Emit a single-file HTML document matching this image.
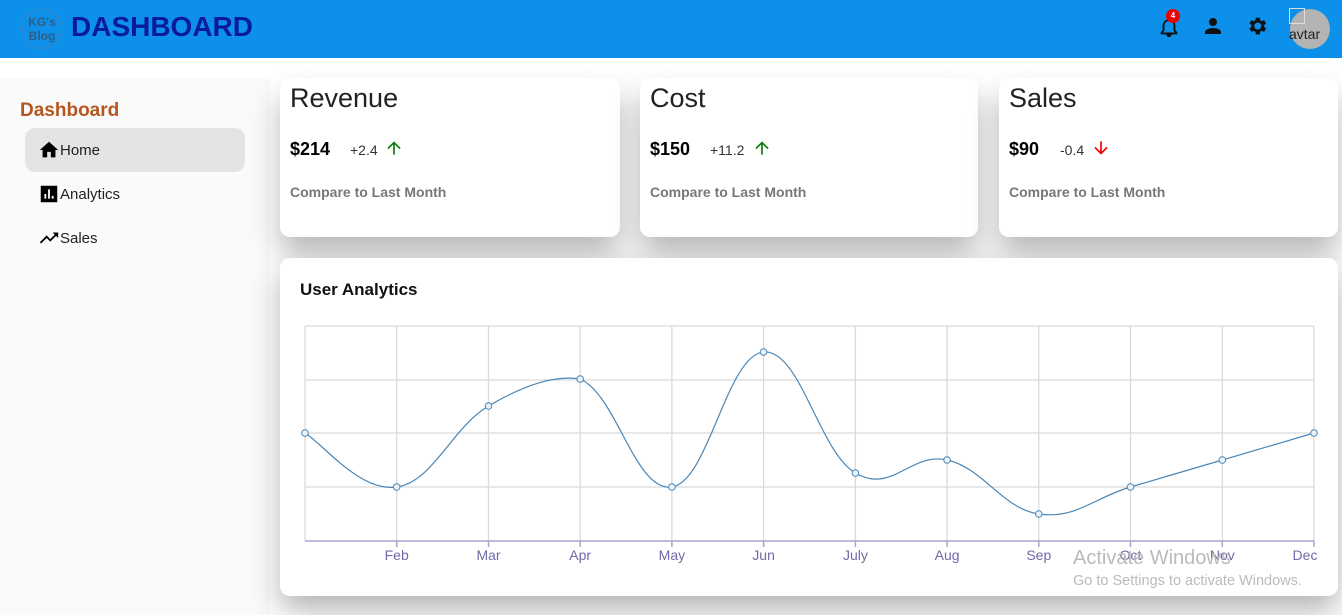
<!DOCTYPE html>
<html><head><meta charset="utf-8"><style>
*{box-sizing:border-box;margin:0;padding:0}
body{width:1342px;height:615px;overflow:hidden;background:#fff;font-family:"Liberation Sans",sans-serif;position:relative}
.hdr{position:absolute;left:0;top:0;width:1342px;height:58px;background:#0d90e9}
.logo{position:absolute;left:22px;top:9px;width:40px;height:40px;border-radius:50%;border:1px solid #3a86c4;color:#2f5e86;font-size:12px;font-weight:bold;line-height:14px;text-align:center;padding-top:5px}
.title{position:absolute;left:71px;top:11px;font-size:28px;font-weight:bold;color:#0a1a9c}
.side{position:absolute;left:0;top:78px;width:270px;height:537px;background:#fafafa}
.side h3{position:absolute;left:20px;top:22px;font-size:19px;color:#b5551f}
.item{position:absolute;left:25px;width:220px;height:44px;border-radius:10px;font-size:15px;color:#222;padding-left:13px;display:flex;align-items:center;gap:0}
.card{position:absolute;top:78px;height:159px;background:#fff;border-radius:10px;box-shadow:0 18px 30px rgba(0,0,0,.28)}
.card h2{position:absolute;left:10px;top:5px;font-size:27px;font-weight:normal;color:#222}
.card .v{position:absolute;left:10px;top:61px;font-size:18px;font-weight:bold}
.card .d{position:absolute;top:64px;font-size:14px;color:#333}
.card .c{position:absolute;left:10px;top:106px;font-size:14px;font-weight:bold;color:#777}
.chart{position:absolute;left:280px;top:258px;width:1058px;height:338px;background:#fff;border-radius:10px;box-shadow:0 14px 30px rgba(0,0,0,.3)}
</style></head><body>
<div class="hdr">
<div class="logo">KG's<br>Blog</div>
<div class="title">DASHBOARD</div>
<svg style="position:absolute;left:1158px;top:16px" width="22" height="22" viewBox="0 0 24 24"><path d="M12 22a2 2 0 0 0 2-2h-4a2 2 0 0 0 2 2zm6-6v-5c0-3-1.6-5.6-4.5-6.3V4a1.5 1.5 0 0 0-3 0v.7C7.6 5.4 6 8 6 11v5l-2 2v1h16v-1z" fill="none" stroke="#111" stroke-width="2"/></svg>
<div style="position:absolute;left:1166px;top:9px;width:14px;height:14px;border-radius:50%;background:#e00;color:#fff;font-size:8px;text-align:center;line-height:14px;font-weight:bold">4</div>
<svg style="position:absolute;left:1201px;top:14px" width="24" height="24" viewBox="0 0 24 24"><path d="M12 12a4 4 0 1 0 0-8 4 4 0 0 0 0 8zm0 2c-2.7 0-8 1.3-8 4v2h16v-2c0-2.7-5.3-4-8-4z" fill="#111"/></svg>
<svg style="position:absolute;left:1245px;top:14px" width="24" height="24" viewBox="0 0 24 24"><path d="M19.1 12.9a7 7 0 0 0 0-1.8l2-1.6-2-3.4-2.4 1a7 7 0 0 0-1.6-.9L14.8 3.6h-4l-.4 2.6a7 7 0 0 0-1.5.9l-2.5-1-2 3.4 2.1 1.6a7 7 0 0 0 0 1.8l-2.1 1.6 2 3.4 2.5-1c.5.4 1 .7 1.5.9l.4 2.6h4l.3-2.6c.6-.2 1.1-.5 1.6-.9l2.4 1 2-3.4zM12.8 15.5a3.5 3.5 0 1 1 0-7 3.5 3.5 0 0 1 0 7z" fill="#111"/></svg>
<div style="position:absolute;left:1290px;top:9px;width:40px;height:40px;border-radius:50%;background:#b3b3b3"></div>
<div style="position:absolute;left:1289px;top:8px;width:16px;height:16px;border:1px solid #ddd"></div>
<div style="position:absolute;left:1289px;top:26px;font-size:14px;color:#222">avtar</div>
</div>
<div class="side">
<h3>Dashboard</h3>
<div class="item" style="top:50px;background:#e5e3e3"><svg width="22" height="22" viewBox="0 0 24 24"><path d="M10 20v-6h4v6h5v-8h3L12 3 2 12h3v8z" fill="#000"/></svg>Home</div>
<div class="item" style="top:94px"><svg width="22" height="22" viewBox="0 0 24 24"><path d="M3 3h18v18H3zM7 12v5h2v-5zm4-5v10h2V7zm4 7v3h2v-3z" fill="#000" fill-rule="evenodd"/></svg>Analytics</div>
<div class="item" style="top:138px"><svg width="22" height="22" viewBox="0 0 24 24"><path d="M16 6l2.3 2.3-4.9 4.9-4-4L2 16.6 3.4 18l6-6 4 4 6.3-6.3L22 12V6z" fill="#000"/></svg>Sales</div>
</div>
<div class="card" style="left:280px;width:340px"><h2>Revenue</h2><div class="v">$214</div><div class="d" style="left:70px">+2.4</div><svg style="position:absolute;left:104px;top:60px" width="20" height="20" viewBox="0 0 24 24"><path d="M4 12l1.4 1.4L11 7.8V20h2V7.8l5.6 5.6L20 12l-8-8z" fill="#0a7a0a"/></svg><div class="c">Compare to Last Month</div></div>
<div class="card" style="left:640px;width:338px"><h2>Cost</h2><div class="v">$150</div><div class="d" style="left:70px">+11.2</div><svg style="position:absolute;left:112px;top:60px" width="20" height="20" viewBox="0 0 24 24"><path d="M4 12l1.4 1.4L11 7.8V20h2V7.8l5.6 5.6L20 12l-8-8z" fill="#0a7a0a"/></svg><div class="c">Compare to Last Month</div></div>
<div class="card" style="left:999px;width:339px"><h2>Sales</h2><div class="v">$90</div><div class="d" style="left:61px">-0.4</div><svg style="position:absolute;left:92px;top:60px" width="20" height="20" viewBox="0 0 24 24"><path d="M20 12l-1.4-1.4-5.6 5.6V4h-2v12.2l-5.6-5.6L4 12l8 8z" fill="#e00"/></svg><div class="c">Compare to Last Month</div></div>
<div class="chart"><div style="position:absolute;left:20px;top:22px;font-size:17px;font-weight:bold;color:#111">User Analytics</div></div>
<svg style="position:absolute;left:0;top:0" width="1342" height="615">
<g stroke="#dadada" stroke-width="1.3" fill="none">
<path d="M305 326H1314M305 380H1314M305 433H1314M305 487H1314"/>
<path d="M305 326V541M396.7 326V541M488.5 326V541M580.2 326V541M671.9 326V541M763.6 326V541M855.4 326V541M947.1 326V541M1038.8 326V541M1130.5 326V541M1222.3 326V541M1314 326V541"/>
</g>
<g stroke="#a9a3cf" stroke-width="1.5"><path d="M305 541H1314"/><path d="M396.7 541v6M488.5 541v6M580.2 541v6M671.9 541v6M763.6 541v6M855.4 541v6M947.1 541v6M1038.8 541v6M1130.5 541v6M1222.3 541v6M1314 541v6"/></g>
<path d="M305,433 C323,443.8 360,492.4 396.7,487 C433.4,481.6 451.8,427.6 488.5,406 C525.2,384.4 555,375 580.2,379 C616.9,395.2 635.2,492.4 671.9,487 C708.6,481.6 726.9,354.8 763.6,352 C800.3,349.2 818.7,451.4 855.4,473 C892.1,494.6 910.4,451.8 947.1,460 C983.8,468.2 1002.1,508.6 1038.8,514 C1075.5,519.4 1093.8,497.8 1130.5,487 C1167.2,476.2 1185.6,470.8 1222.3,460 C1259,449.2 1296,438.4 1314,433" fill="none" stroke="#4a86b5" stroke-width="1.2"/>
<g fill="#eaf2fa" stroke="#4a86b5" stroke-width="1">
<circle cx="305" cy="433" r="3.3"/><circle cx="396.7" cy="487" r="3.3"/><circle cx="488.5" cy="406" r="3.3"/><circle cx="580.2" cy="379" r="3.3"/><circle cx="671.9" cy="487" r="3.3"/><circle cx="763.6" cy="352" r="3.3"/><circle cx="855.4" cy="473" r="3.3"/><circle cx="947.1" cy="460" r="3.3"/><circle cx="1038.8" cy="514" r="3.3"/><circle cx="1130.5" cy="487" r="3.3"/><circle cx="1222.3" cy="460" r="3.3"/><circle cx="1314" cy="433" r="3.3"/>
</g>
<g font-family="Liberation Sans" font-size="14" fill="#6f6aa8" text-anchor="middle">
<text x="396.7" y="560">Feb</text><text x="488.5" y="560">Mar</text><text x="580.2" y="560">Apr</text><text x="671.9" y="560">May</text><text x="763.6" y="560">Jun</text><text x="855.4" y="560">July</text><text x="947.1" y="560">Aug</text><text x="1038.8" y="560">Sep</text><text x="1130.5" y="560">Oct</text><text x="1222.3" y="560">Nov</text><text x="1305" y="560">Dec</text>
</g>
<text x="1073" y="564" font-family="Liberation Sans" font-size="20" fill="#bbb">Activate Windows</text>
<text x="1073" y="585" font-family="Liberation Sans" font-size="14.5" fill="#bbb">Go to Settings to activate Windows.</text>
</svg>
</body></html>
